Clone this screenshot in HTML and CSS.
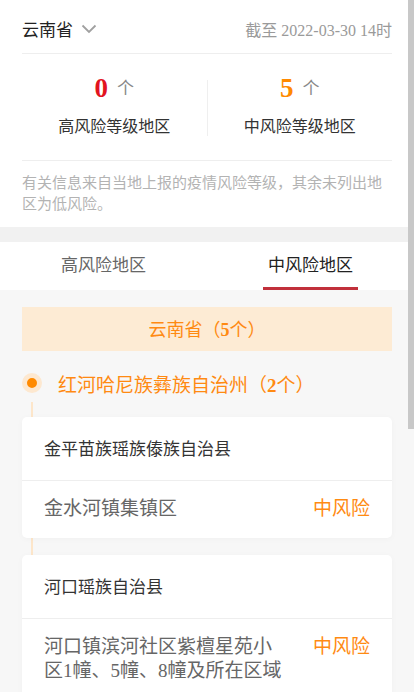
FILE: index.html
```html
<!DOCTYPE html>
<html lang="zh-CN">

<head>
  <meta charset="UTF-8">
  <meta name="viewport" content="width=device-width, initial-scale=1.0">
  <title>风险等级查询</title>
  <link rel="stylesheet" href="styles.css">
</head>

<body>

  <div class="summary">
    <div class="summary-head">
      <div class="province">
        <span>云南省</span>
        <svg class="chevron" width="16" height="10" viewBox="0 0 16 10">
          <polyline points="1.5,1.5 8,8 14.5,1.5" fill="none" stroke="#a0a0a0" stroke-width="1.8" />
        </svg>
      </div>
      <div class="update">截至 2022-03-30 14时</div>
    </div>

    <div class="stats">
      <div class="stat">
        <div class="stat-num"><b class="num high">0</b><span class="unit">个</span></div>
        <div class="stat-label">高风险等级地区</div>
      </div>
      <div class="stat">
        <div class="stat-num"><b class="num mid">5</b><span class="unit">个</span></div>
        <div class="stat-label">中风险等级地区</div>
      </div>
    </div>

    <p class="notice">有关信息来自当地上报的疫情风险等级，其余未列出地区为低风险。</p>
  </div>

  <div class="tabs">
    <div class="tab"><span>高风险地区</span></div>
    <div class="tab active"><span>中风险地区</span></div>
  </div>

  <div class="list">
    <div class="banner">云南省（<b>5</b>个）</div>

    <div class="group">
      <div class="group-title">
        <span class="dot"></span>
        <span>红河哈尼族彝族自治州（<b>2</b>个）</span>
      </div>

      <div class="card">
        <div class="county">金平苗族瑶族傣族自治县</div>
        <div class="area">
          <span class="area-name">金水河镇集镇区</span>
          <span class="level">中风险</span>
        </div>
      </div>

      <div class="card">
        <div class="county">河口瑶族自治县</div>
        <div class="area">
          <span class="area-name">河口镇滨河社区紫檀星苑小区1幢、5幢、8幢及所在区域</span>
          <span class="level">中风险</span>
        </div>
      </div>
    </div>
  </div>

  <div class="scroll-thumb"></div>

</body>

</html>
```

FILE: styles.css
```css
html,
body {
  overflow: hidden;
}

body {
  margin: 0;
  font-family: "Liberation Serif", "Noto Sans CJK SC", serif;
  background-color: #f7f7f7;
  color: #333;
}

.summary {
  background-color: #fff;
  padding: 0 22px;
  border-bottom: 15px solid #f1f1f1;
}

.summary-head {
  display: flex;
  justify-content: space-between;
  align-items: center;
  padding-top: 4px;
  height: 49px;
  border-bottom: 1px solid #eeeeee;
}

.province {
  display: flex;
  align-items: center;
  gap: 8px;
  font-size: 17px;
  color: #222;
}

.update {
  font-size: 16px;
  color: #9a9a9a;
}

.stats {
  display: flex;
  padding: 26px 0 24px;
  border-bottom: 1px solid #eeeeee;
}

.stat {
  flex: 1;
  display: flex;
  flex-direction: column;
  align-items: center;
  gap: 21px;
}

.stat + .stat {
  border-left: 1px solid #efefef;
}

.stat-num {
  display: flex;
  align-items: center;
  gap: 9px;
  height: 17px;
  line-height: 17px;
}

.num {
  font-size: 27px;
}

.num.high {
  color: #e2141f;
}

.num.mid {
  color: #ff8a00;
}

.unit {
  font-size: 17px;
  color: #888;
}

.stat-label {
  font-size: 16px;
  line-height: 18px;
  color: #333;
}

.notice {
  margin: 0;
  padding: 12px 0;
  font-size: 15px;
  line-height: 21px;
  color: #b3b3b3;
}

.tabs {
  display: flex;
  background-color: #fff;
}

.tab {
  flex: 1;
  display: flex;
  justify-content: center;
  font-size: 17px;
  color: #666;
}

.tab span {
  display: block;
  padding: 12px 5px 10px;
  line-height: 23px;
  border-bottom: 3px solid transparent;
}

.tab.active {
  color: #222;
}

.tab.active span {
  border-bottom-color: #c1303b;
}

.list {
  padding: 17px 22px 40px;
}

.banner {
  height: 44px;
  line-height: 46px;
  text-align: center;
  background-color: #fdebd4;
  color: #ff8a12;
  font-size: 18px;
}

.group {
  position: relative;
}

/* timeline line behind the cards */
.group::before {
  content: "";
  position: absolute;
  left: 9px;
  top: 32px;
  bottom: 0;
  width: 2px;
  background-color: #fde6ca;
}

.group-title {
  display: flex;
  align-items: center;
  gap: 16px;
  margin: 19px 0 21px;
  height: 26px;
  font-size: 19px;
  color: #ff8a12;
}

.dot {
  width: 10px;
  height: 10px;
  border: 5px solid #fde8d0;
  border-radius: 50%;
  background-color: #ff8a00;
}

.card {
  position: relative;
  background-color: #fff;
  border-radius: 5px;
  box-shadow: 0 1px 6px rgba(0, 0, 0, 0.03);
  margin-bottom: 17px;
}

.county {
  padding: 22px 22px 19px;
  font-size: 17px;
  line-height: 22px;
  color: #333;
  border-bottom: 1px solid #eeeeee;
}

.area {
  display: flex;
  justify-content: space-between;
  gap: 28px;
  padding: 16px 22px 17px;
  font-size: 19px;
  line-height: 24px;
}

.area-name {
  flex: 1;
  color: #666;
}

.level {
  color: #ff8a12;
}

.scroll-thumb {
  position: fixed;
  top: 0;
  right: 0;
  width: 6px;
  height: 429px;
  background-color: #c8c8c8;
}
```
